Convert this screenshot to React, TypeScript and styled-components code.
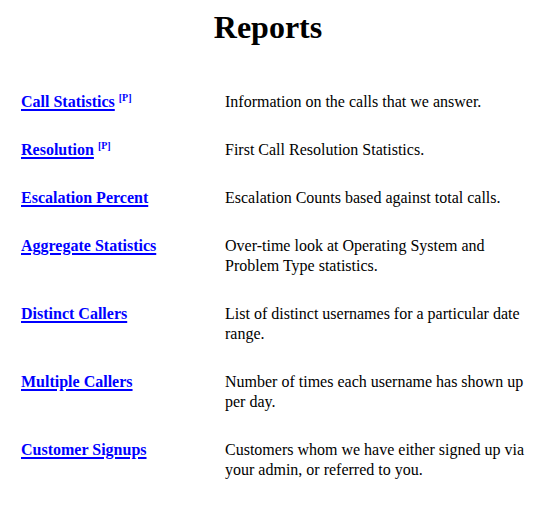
import React from 'react';
import styled, { createGlobalStyle } from 'styled-components';

const reports: { title: string; premium?: boolean; text: string }[] = [
  { title: 'Call Statistics', premium: true, text: 'Information on the calls that we answer.' },
  { title: 'Resolution', premium: true, text: 'First Call Resolution Statistics.' },
  { title: 'Escalation Percent', text: 'Escalation Counts based against total calls.' },
  {
    title: 'Aggregate Statistics',
    text: 'Over-time look at Operating System and Problem Type statistics.',
  },
  { title: 'Distinct Callers', text: 'List of distinct usernames for a particular date range.' },
  { title: 'Multiple Callers', text: 'Number of times each username has shown up per day.' },
  {
    title: 'Customer Signups',
    text: 'Customers whom we have either signed up via your admin, or referred to you.',
  },
];

const GlobalStyle = createGlobalStyle`
  body {
    margin: 0;
    background: #ffffff;
    color: #000000;
    font-family: "Liberation Serif", "Times New Roman", serif;
    font-size: 16px;
  }
`;

const Page = styled.main`
  width: 536px;
`;

const Title = styled.h1`
  margin: 9px 0 0;
  font-size: 32px;
  line-height: 36px;
  font-weight: bold;
  text-align: center;
`;

const ReportList = styled.div`
  display: grid;
  grid-template-columns: 204px 306px;
  row-gap: 28px;
  margin-top: 47px;
  padding-left: 21px;
  line-height: 20px;
`;

const ReportName = styled.div`
  white-space: nowrap;
`;

const ReportLink = styled.a`
  color: #0000ff;
  font-weight: bold;
  text-decoration: underline;
  text-decoration-thickness: 2px;
  text-underline-offset: 2px;
`;

const Premium = styled.a`
  margin-left: 4px;
  color: #0000ff;
  font-size: 10px;
  font-weight: bold;
  text-decoration: none;
  vertical-align: 6px;
  line-height: 0;
`;

const Description = styled.div``;

export default function App() {
  return (
    <>
      <GlobalStyle />
      <Page>
        <Title>Reports</Title>
        <ReportList>
          {reports.map((report) => (
            <React.Fragment key={report.title}>
              <ReportName>
                <ReportLink href="#">{report.title}</ReportLink>
                {report.premium && <Premium href="#">[P]</Premium>}
              </ReportName>
              <Description>{report.text}</Description>
            </React.Fragment>
          ))}
        </ReportList>
      </Page>
    </>
  );
}
